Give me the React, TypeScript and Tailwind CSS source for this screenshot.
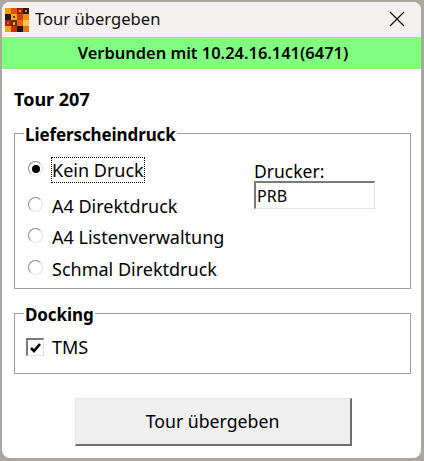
import React from "react";

const FONT = "font-['Noto_Sans','Open_Sans',sans-serif]";

const ICON_COLORS = [
  "#f59a0c", "#d9530f", "#a81c0a", "#2a1a0c",
  "#2c150b", "#f7a91f", "#c8400c", "#f08a10",
  "#b3230b", "#6b2a0c", "#e8620e", "#f9c24a",
  "#f7a21a", "#c7320c", "#1f120a", "#e5740f",
];

const AppIcon = () => (
  <svg width="24" height="24" viewBox="0 0 24 24" className="shrink-0">
    {ICON_COLORS.map((c, i) => (
      <rect key={i} x={(i % 4) * 6} y={Math.floor(i / 4) * 6} width="6" height="6" fill={c} />
    ))}
    <rect x="8" y="8" width="2" height="2" fill="#6b3a0c" />
    <rect x="14" y="2" width="2" height="2" fill="#e8a040" />
    <rect x="2" y="14" width="2" height="2" fill="#e2611a" />
    <rect x="8" y="14" width="2" height="3" fill="#e8b040" />
    <rect x="20" y="2" width="2" height="2" fill="#b88a3c" />
  </svg>
);

const Radio = ({ label, checked, focused, className }: { label: string; checked?: boolean; focused?: boolean; className: string }) => (
  <div className={`flex items-start ${className}`}>
    <span className="mt-[3px] flex size-[15px] shrink-0 items-center justify-center rounded-full border border-t-[#8c8c8c] border-l-[#8c8c8c] border-r-[#e2e2e2] border-b-[#e2e2e2] bg-white">
      {checked && <span className="size-[8px] rounded-full bg-black" />}
    </span>
    <span className={`ml-[9px] text-[18px] leading-[24px] text-black ${focused ? "outline-1 outline-dotted outline-black" : ""}`}>
      {label}
    </span>
  </div>
);

const Group = ({ title, className, children }: { title: string; className: string; children: React.ReactNode }) => (
  <fieldset className={`mr-[10px] ml-[12px] border border-[#a0a0a0] ${className}`}>
    <legend className="ml-[9px] px-px pt-[4px] text-[17px] leading-[22px] font-bold tracking-[-0.1px] text-black">
      {title}
    </legend>
    {children}
  </fieldset>
);

export default function App() {
  return (
    <div className={`h-[461px] w-[424px] bg-[#a8a8a0] pt-[2px] pr-[3px] pb-[3px] pl-[2px] ${FONT}`}>
      <div className="flex h-full flex-col overflow-hidden rounded-[8px] bg-white">
        <div className="flex h-[35px] items-center bg-[#f3f0ef] pl-[3px]">
          <AppIcon />
          <span className="ml-[6px] mb-[2px] text-[16.6px] leading-[24px] text-[#111]">Tour übergeben</span>
          <svg width="16" height="16" viewBox="0 0 16 16" className="mr-[16px] mb-[1px] ml-auto" fill="none" stroke="#111" strokeWidth="1.2">
            <path d="M1 1 L15 15 M15 1 L1 15" />
          </svg>
        </div>
        <div className="flex h-[32px] items-center justify-center bg-[#80ff80] pl-[3px] text-[16.45px] font-semibold text-black">
          Verbunden mit 10.24.16.141(6471)
        </div>
        <div className="mt-[18px] ml-[12px] h-[24px] text-[18px] leading-[24px] font-bold text-black">
          Tour 207
        </div>
        <Group title="Lieferscheindruck" className="mt-[9px] h-[169px]">
          <div className="flex">
            <div className="ml-[13px] flex w-[226px] flex-col pt-[12px]">
              <Radio label="Kein Druck" checked focused className="" />
              <Radio label="A4 Direktdruck" className="mt-[12px]" />
              <Radio label="A4 Listenverwaltung" className="mt-[7px]" />
              <Radio label="Schmal Direktdruck" className="mt-[8px]" />
            </div>
            <div className="flex flex-col pt-[15px]">
              <span className="text-[17.5px] leading-[20px] text-black">Drucker:</span>
              <div className="h-[28px] w-[121px] border border-t-2 border-l-2 border-t-[#7a7a7a] border-r-[#e3e3e3] border-b-[#e3e3e3] border-l-[#7a7a7a] pl-px text-[16px] leading-[26px] text-black">
                PRB
              </div>
            </div>
          </div>
        </Group>
        <Group title="Docking" className="mt-[11px] h-[74px]">
          <div className="ml-[11px] flex items-center pt-[9px]">
            <span className="flex size-[18px] items-center justify-center border border-t-2 border-l-2 border-t-[#7a7a7a] border-r-[#e3e3e3] border-b-[#e3e3e3] border-l-[#7a7a7a] bg-white">
              <svg width="11" height="10" viewBox="0 0 11 10" fill="none" stroke="#000" strokeWidth="2.6">
                <path d="M1 5 L4 8 L10 1" />
              </svg>
            </span>
            <span className="ml-[8px] text-[18px] leading-[24px] text-black">TMS</span>
          </div>
        </Group>
        <div className="mt-[24px] flex justify-center pl-[3px]">
          <button className="h-[48px] w-[277px] border border-r-2 border-b-2 border-t-[#e6e6e6] border-r-[#6e6e6e] border-b-[#6e6e6e] border-l-[#e6e6e6] bg-[#efefef] text-[17.7px] text-black">
            Tour übergeben
          </button>
        </div>
      </div>
    </div>
  );
}
